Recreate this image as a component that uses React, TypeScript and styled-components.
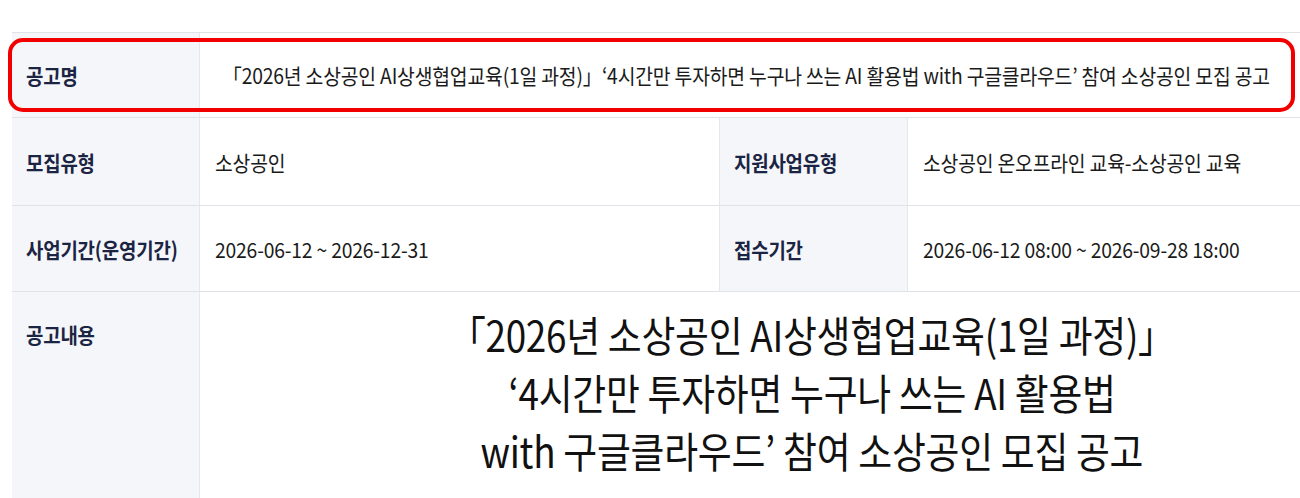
import React from "react";
import styled, { createGlobalStyle } from "styled-components";

const GlobalStyle = createGlobalStyle`
  html, body {
    margin: 0;
    padding: 0;
    background: #ffffff;
  }
  body {
    font-family: "Noto Sans CJK KR", "Noto Sans", sans-serif;
    overflow: hidden;
  }
`;

const Page = styled.div`
  position: relative;
  width: 1300px;
  height: 498px;
  padding: 32px 0 0 12px;
  box-sizing: border-box;
  overflow: hidden;
`;

const Table = styled.div`
  display: grid;
  grid-template-columns: 188px 520px 188px 1fr;
  grid-template-rows: 85px 88px 86px 240px;
  border-top: 1px solid #dfe2e7;
`;

const Cell = styled.div<{ $span?: number; $label?: boolean; $top?: boolean; $center?: boolean; $last?: boolean }>`
  grid-column: span ${(p) => p.$span ?? 1};
  display: flex;
  align-items: ${(p) => (p.$top ? "flex-start" : "center")};
  justify-content: ${(p) => (p.$center ? "center" : "flex-start")};
  padding: ${(p) =>
    p.$top ? "27px 0 0 14px" : p.$center ? "0 8px 0 0" : p.$label ? "0 0 0 14px" : "0 0 0 15px"};
  background: ${(p) => (p.$label ? "#f4f6fa" : "#ffffff")};
  border-bottom: 1px solid #dfe2e7;
  border-right: ${(p) => (p.$last ? "none" : "1px solid #e4e7ec")};
  box-sizing: border-box;
  overflow: hidden;
  min-width: 0;
`;

const Label = styled.span`
  display: inline-block;
  font-size: 21px;
  font-weight: 700;
  color: #1b2442;
  white-space: nowrap;
  transform: scaleX(0.9);
  transform-origin: left center;
  letter-spacing: -0.2px;
`;

const Value = styled.span<{ $origin?: string }>`
  display: inline-block;
  font-size: 21px;
  font-weight: 400;
  color: #1a1a1a;
  white-space: nowrap;
  transform: scaleX(0.92);
  transform-origin: ${(p) => p.$origin ?? "left center"};
  letter-spacing: -0.2px;
`;

const Content = styled.div`
  grid-column: span 3;
  display: flex;
  flex-direction: column;
  align-items: center;
  padding: 13px 0 0 124px;
  box-sizing: border-box;
  border-bottom: 1px solid #dfe2e7;
  overflow: hidden;
`;

const BigLine = styled.div`
  font-size: 42px;
  line-height: 58px;
  color: #111111;
  white-space: nowrap;
  transform: scaleX(0.877);
  transform-origin: center center;
  letter-spacing: -0.3px;
`;

const Highlight = styled.div`
  position: absolute;
  left: 8px;
  top: 38px;
  width: 1287px;
  height: 74px;
  border: 4px solid #f20000;
  border-radius: 15px;
  box-sizing: border-box;
  pointer-events: none;
`;

const title =
  "「2026년 소상공인 AI상생협업교육(1일 과정)」‘4시간만 투자하면 누구나 쓰는 AI 활용법 with 구글클라우드’ 참여 소상공인 모집 공고";

export default function App() {
  return (
    <>
      <GlobalStyle />
      <Page>
        <Table>
          <Cell $label>
            <Label>공고명</Label>
          </Cell>
          <Cell $span={3} $center $last>
            <Value $origin="center center">{title}</Value>
          </Cell>

          <Cell $label>
            <Label>모집유형</Label>
          </Cell>
          <Cell>
            <Value>소상공인</Value>
          </Cell>
          <Cell $label>
            <Label>지원사업유형</Label>
          </Cell>
          <Cell $last>
            <Value>소상공인 온오프라인 교육-소상공인 교육</Value>
          </Cell>

          <Cell $label>
            <Label>사업기간(운영기간)</Label>
          </Cell>
          <Cell>
            <Value>2026-06-12 ~ 2026-12-31</Value>
          </Cell>
          <Cell $label>
            <Label>접수기간</Label>
          </Cell>
          <Cell $last>
            <Value>2026-06-12 08:00 ~ 2026-09-28 18:00</Value>
          </Cell>

          <Cell $label $top>
            <Label>공고내용</Label>
          </Cell>
          <Content>
            <BigLine>「2026년 소상공인 AI상생협업교육(1일 과정)」</BigLine>
            <BigLine>‘4시간만 투자하면 누구나 쓰는 AI 활용법</BigLine>
            <BigLine>with 구글클라우드’ 참여 소상공인 모집 공고</BigLine>
          </Content>
        </Table>
        <Highlight />
      </Page>
    </>
  );
}
